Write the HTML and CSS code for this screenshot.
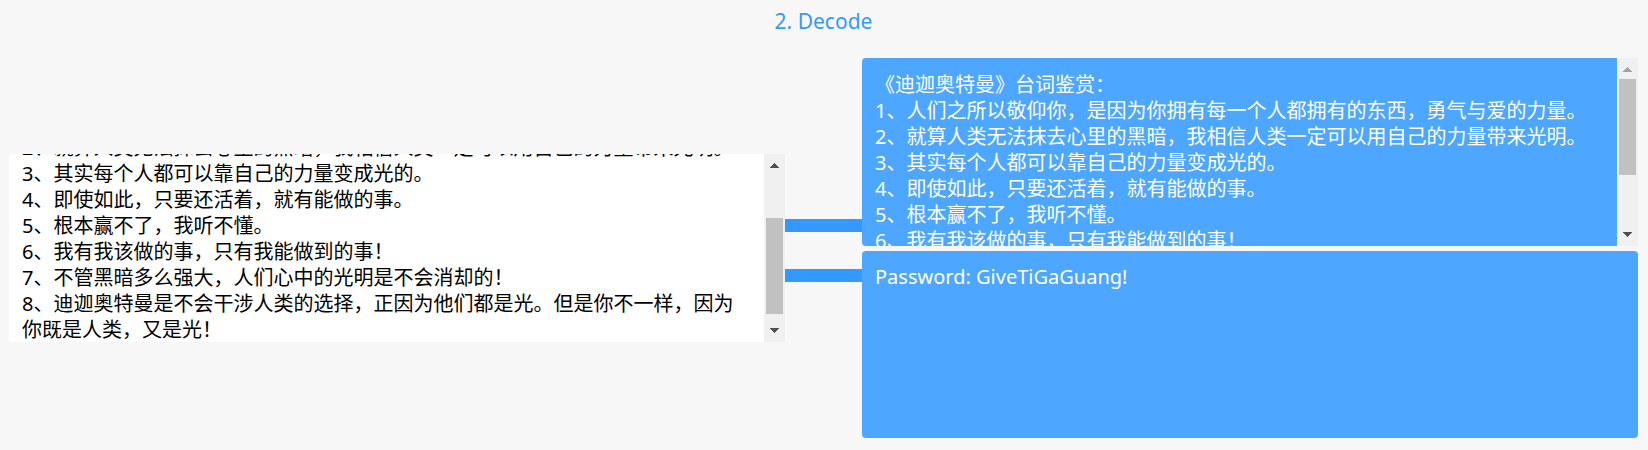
FILE: index.html
```html
<!DOCTYPE html>
<html lang="zh-CN">
<head>
<meta charset="utf-8">
<meta name="viewport" content="width=device-width, initial-scale=1">
<title>Decode</title>
<link rel="stylesheet" href="styles.css">
</head>
<body>
<main class="step">
  <h2 class="step-title">2. Decode</h2>
  <div class="flow">
    <div class="panel panel-input" data-scroll="85">
      <textarea class="text" aria-label="Encoded text" spellcheck="false">《迪迦奥特曼》台词鉴赏：
1、人们之所以敬仰你，是因为你拥有每一个人都拥有的东西，勇气与爱的力量。
2、就算人类无法抹去心里的黑暗，我相信人类一定可以用自己的力量带来光明。
3、其实每个人都可以靠自己的力量变成光的。
4、即使如此，只要还活着，就有能做的事。
5、根本赢不了，我听不懂。
6、我有我该做的事，只有我能做到的事！
7、不管黑暗多么强大，人们心中的光明是不会消却的！
8、迪迦奥特曼是不会干涉人类的选择，正因为他们都是光。但是你不一样，因为你既是人类，又是光！</textarea>
      <div class="scrollbar">
        <button class="arrow" type="button" data-dir="-1" aria-label="Scroll up"><svg width="9" height="5" viewBox="0 0 9 5"><path d="M4 0h1v1h1v1h1v1h1v1h1v1H0V4h1V3h1V2h1V1h1z"/></svg></button>
        <div class="track"><div class="thumb"></div></div>
        <button class="arrow" type="button" data-dir="1" aria-label="Scroll down"><svg width="9" height="5" viewBox="0 0 9 5"><path d="M0 0h9v1H8v1H7v1H6v1H5v1H4V4H3V3H2V2H1V1H0z"/></svg></button>
      </div>
    </div>
    <div class="links" aria-hidden="true">
      <div class="link-bar"></div>
      <div class="link-bar"></div>
    </div>
    <div class="outputs">
      <div class="panel panel-output" data-scroll="0">
        <textarea class="text" aria-label="Decoded text" spellcheck="false" readonly>《迪迦奥特曼》台词鉴赏：
1、人们之所以敬仰你，是因为你拥有每一个人都拥有的东西，勇气与爱的力量。
2、就算人类无法抹去心里的黑暗，我相信人类一定可以用自己的力量带来光明。
3、其实每个人都可以靠自己的力量变成光的。
4、即使如此，只要还活着，就有能做的事。
5、根本赢不了，我听不懂。
6、我有我该做的事，只有我能做到的事！
7、不管黑暗多么强大，人们心中的光明是不会消却的！
8、迪迦奥特曼是不会干涉人类的选择，正因为他们都是光。但是你不一样，因为你既是人类，又是光！</textarea>
        <div class="scrollbar">
          <button class="arrow" type="button" data-dir="-1" aria-label="Scroll up"><svg width="9" height="5" viewBox="0 0 9 5"><path d="M4 0h1v1h1v1h1v1h1v1h1v1H0V4h1V3h1V2h1V1h1z"/></svg></button>
          <div class="track"><div class="thumb"></div></div>
          <button class="arrow" type="button" data-dir="1" aria-label="Scroll down"><svg width="9" height="5" viewBox="0 0 9 5"><path d="M0 0h9v1H8v1H7v1H6v1H5v1H4V4H3V3H2V2H1V1H0z"/></svg></button>
        </div>
      </div>
      <div class="panel panel-output panel-message">
        <textarea class="text" aria-label="Hidden message" spellcheck="false" readonly>Password: GiveTiGaGuang!</textarea>
      </div>
    </div>
  </div>
</main>
<script src="script.js"></script>
</body>
</html>
```
FILE: styles.css
```css
* {
  box-sizing: border-box;
}

body {
  margin: 0;
  background: #f7f7f7;
  font-family: "Noto Sans", "Noto Sans CJK SC", sans-serif;
  font-size: 20px;
  line-height: 26px;
}

.step {
  padding: 8px 10px 12px 9px;
}

.step-title {
  margin: 0 0 24px;
  color: #3399ff;
  font-size: 21px;
  font-weight: 400;
  line-height: 26px;
  text-align: center;
}

.flow {
  display: grid;
  grid-template-columns: 1fr 77px 1fr;
  align-items: center;
}

.panel {
  display: flex;
  height: 188px;
  border-radius: 4px;
}

.panel-input {
  background: #ffffff;
  color: #000000;
}

.panel-output {
  background: #4da6ff;
  color: #ffffff;
}

.panel-message {
  height: 187px;
}

.panel:has(.scrollbar) {
  border-radius: 4px 0 0 4px;
}

.text {
  flex: 1;
  min-width: 0;
  margin: 0;
  padding: 14px 13px;
  border: 0;
  outline: 0;
  background: transparent;
  color: inherit;
  font: inherit;
  line-height: 26px;
  resize: none;
  overflow: hidden;
}

.panel-message .text {
  padding-top: 13px;
}

.scrollbar {
  display: flex;
  flex-direction: column;
  width: 21px;
  background: #f0f0f0;
}

.arrow {
  display: flex;
  align-items: center;
  justify-content: center;
  height: 21px;
  padding: 2px 0 0;
  border: 0;
  background: transparent;
  color: #505050;
}

.arrow:last-child {
  padding: 0 0 2px;
}

.arrow:disabled {
  color: #a3a3a3;
}

.arrow svg {
  display: block;
  fill: currentColor;
  shape-rendering: crispEdges;
}

.track {
  flex: 1;
  padding: 0 2px;
}

.thumb {
  background: #c1c1c1;
}

.links {
  display: grid;
  gap: 37px;
  padding-top: 5px;
}

.link-bar {
  height: 13px;
  background: #3399ff;
}

.outputs {
  display: grid;
  gap: 5px;
}
```
FILE: script.js
```js
document.querySelectorAll(".panel[data-scroll]").forEach(function (panel) {
  var text = panel.querySelector(".text");
  var track = panel.querySelector(".track");
  var thumb = panel.querySelector(".thumb");
  var arrows = panel.querySelectorAll(".arrow");

  function update() {
    var scale = track.clientHeight / text.scrollHeight;
    thumb.style.height = Math.ceil(text.clientHeight * scale) + "px";
    thumb.style.transform = "translateY(" + Math.round(text.scrollTop * scale) + "px)";
    arrows[0].disabled = text.scrollTop <= 0;
  }

  arrows.forEach(function (arrow) {
    arrow.addEventListener("click", function () {
      text.scrollTop += 26 * Number(arrow.dataset.dir);
    });
  });

  text.addEventListener("scroll", update);
  text.scrollTop = Number(panel.dataset.scroll);
  update();
});
```
